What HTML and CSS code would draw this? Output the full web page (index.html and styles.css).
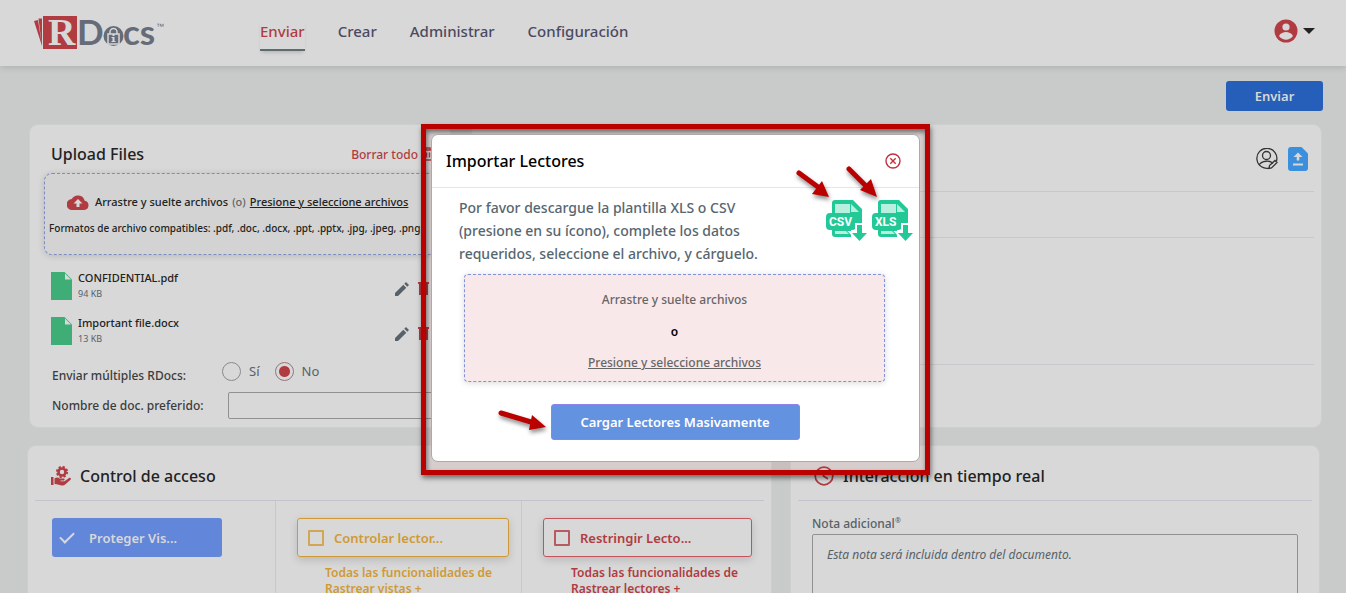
FILE: index.html
```html
<!DOCTYPE html>
<html lang="es">
<head>
  <meta charset="UTF-8" />
  <meta name="viewport" content="width=device-width, initial-scale=1.0" />
  <title>RDocs - Enviar</title>
  <link rel="stylesheet" href="styles.css">
</head>
<body>

  <header class="navbar">
    <a href="#" class="logo" aria-label="RDocs">
      <svg width="136" height="56" viewBox="0 -10 136 56">
        <path d="M0 6l4-1 4 26z M4.500 3.500h3.500v28z" fill="#b03c42" />
        <rect x="9" y="1" width="34" height="33" fill="#b03c42" />
        <text x="14" y="30" class="logo-r">R</text>
        <text x="43" y="30" class="logo-docs">D</text>
        <circle cx="79.500" cy="21" r="10" fill="#666b78" />
        <path d="M74 19h11v10h-11z M76 19v-2a3.500 3.500 0 0 1 7 0v2" fill="none" stroke="#d8d8d8" stroke-width="1.500" />
        <path d="M77.500 22h3v4h1v1h-4v-1h1v-3h-1z M78.500 19h2v2h-2z" fill="#d8d8d8" />
        <text x="89" y="30" class="logo-docs">cs</text>
        <text x="122" y="14" class="logo-tm">™</text>
      </svg>
    </a>
    <nav class="navbar-menu">
      <a href="#" class="active">Enviar</a>
      <a href="#">Crear</a>
      <a href="#">Administrar</a>
      <a href="#">Configuración</a>
    </nav>
    <button class="profile" aria-label="Mi cuenta">
      <svg width="24" height="24" viewBox="0 0 24 24">
        <circle cx="12" cy="12" r="11.500" fill="#b03c42" />
        <circle cx="12" cy="8" r="3.600" fill="#d8d8d8" />
        <path d="M5 17c1.500-3 4.500-4 7-4s5.500 1 7 4c-2 2.700-4.500 3.700-7 3.700S7 19.700 5 17z" fill="#d8d8d8" />
      </svg>
      <svg width="12" height="6" viewBox="0 0 12 6"><path d="M0 0h12L6 6z" fill="#222" /></svg>
    </button>
  </header>

  <main>
    <div class="actions">
      <button class="btn-send">Enviar</button>
    </div>

    <div class="row row-top">
      <!-- Upload Files -->
      <section class="card upload">
        <div class="upload-head">
          <h2>Upload Files</h2>
          <a href="#" class="clear-all">Borrar todo
            <svg width="12" height="14" viewBox="0 0 12 14"><path d="M0 3h12M4 3V1h4v2M2 3v10h8V3M4.500 5.500v5M7.500 5.500v5" fill="none" stroke="#b03c42" stroke-width="1.500" /></svg>
          </a>
        </div>
        <div class="drop-files">
          <p class="drop-line">
            <svg width="22" height="15" viewBox="0 0 22 15">
              <path d="M17.700 5.700A7 7 0 0 0 4.800 4 5.500 5.500 0 0 0 5.500 15h11.700a4.700 4.700 0 0 0 .5-9.300z" fill="#b03c42" />
              <path d="M11 4l4.500 4.500h-3V12h-3V8.500h-3z" fill="#d8d8d8" />
            </svg>
            <span>Arrastre y suelte archivos</span>
            <span class="or">(o)</span>
            <a href="#">Presione y seleccione archivos</a>
          </p>
          <p class="formats">Formatos de archivo compatibles: .pdf, .doc, .docx, .ppt, .pptx, .jpg, .jpeg, .png</p>
        </div>

        <ul class="files">
          <li>
            <svg width="21" height="28" viewBox="0 0 21 28"><path d="M0 0h13.500L21 7.500V28H0z" fill="#3ead76" /><path d="M14 1.500V7.500h6z" fill="#d8d8d8" /></svg>
            <div class="file-info">
              <span class="file-name">CONFIDENTIAL.pdf</span>
              <span class="file-size">94 KB</span>
            </div>
            <button aria-label="Editar">
              <svg width="14" height="14" viewBox="0 0 14 14"><path d="M0 11l8.300-8.300 3 3L3 14H0zM9.300 1.700L11 0l3 3-1.700 1.700z" fill="#566169" /></svg>
            </button>
            <button aria-label="Borrar">
              <svg width="11" height="13" viewBox="0 0 11 13"><path d="M0 0h11v2H0zM1 2h9v11H1z" fill="#b03c42" /></svg>
            </button>
          </li>
          <li>
            <svg width="21" height="28" viewBox="0 0 21 28"><path d="M0 0h13.500L21 7.500V28H0z" fill="#3ead76" /><path d="M14 1.500V7.500h6z" fill="#d8d8d8" /></svg>
            <div class="file-info">
              <span class="file-name">Important file.docx</span>
              <span class="file-size">13 KB</span>
            </div>
            <button aria-label="Editar">
              <svg width="14" height="14" viewBox="0 0 14 14"><path d="M0 11l8.300-8.300 3 3L3 14H0zM9.300 1.700L11 0l3 3-1.700 1.700z" fill="#566169" /></svg>
            </button>
            <button aria-label="Borrar">
              <svg width="11" height="13" viewBox="0 0 11 13"><path d="M0 0h11v2H0zM1 2h9v11H1z" fill="#b03c42" /></svg>
            </button>
          </li>
        </ul>

        <div class="field">
          <span class="field-label">Enviar múltiples RDocs:</span>
          <div class="radios">
            <label><input type="radio" name="multiple" /> Sí</label>
            <label><input type="radio" name="multiple" checked /> No</label>
          </div>
        </div>
        <div class="field">
          <label class="field-label" for="docName">Nombre de doc. preferido:</label>
          <input type="text" id="docName" />
        </div>
      </section>

      <!-- Readers -->
      <section class="card readers">
        <div class="readers-head">
          <button aria-label="Editar lectores">
            <svg width="22" height="22" viewBox="0 0 22 22" fill="none" stroke="#333" stroke-width="1.300">
              <path d="M14 19.800A10 10 0 1 1 20.500 13" />
              <circle cx="10.500" cy="7.500" r="4" />
              <path d="M3 17c3-4.500 11-5 14-1.500M13 20.500l.5-3 5.500-5 2 2-5.500 5.500z" />
            </svg>
          </button>
          <button aria-label="Importar lectores">
            <svg width="20" height="24" viewBox="0 0 20 24">
              <path d="M3 0h10.500L20 6.500V21a3 3 0 0 1-3 3H3a3 3 0 0 1-3-3V3a3 3 0 0 1 3-3z" fill="#3b8fdd" />
              <path d="M10 5.500l4.500 4.500h-3.200v3.500H8.700V10H5.500zM5 16.500h10v2H5z" fill="#d8d8d8" />
            </svg>
          </button>
        </div>
        <div class="readers-line"></div>
        <div class="readers-body"></div>
      </section>
    </div>

    <div class="row row-bottom">
      <!-- Access control -->
      <section class="card access">
        <div class="card-head">
          <svg width="20" height="20" viewBox="0 0 20 20">
            <circle cx="11" cy="6" r="3.500" fill="none" stroke="#b03c42" stroke-width="2.600" />
            <circle cx="11" cy="6" r="5.200" fill="none" stroke="#b03c42" stroke-width="1.800" stroke-dasharray="2.300 1.780" />
            <path d="M0 11h2.500v8H0zM3.500 12.500c2-1.500 4-1 5 0h4c1.500 0 1.500 2 0 2h-3v.7h4L18 12c1.300-.7 2.500.8 1.500 1.700l-5 4.500c-1 .8-2 1.300-3.500 1.300-2.500 0-4-1.500-7.500-1.500z" fill="#b03c42" />
          </svg>
          <h2>Control de acceso</h2>
        </div>
        <div class="access-cols">
          <div class="access-col">
            <label class="option option-blue"><input type="checkbox" checked /> Proteger Vis...</label>
          </div>
          <div class="access-col">
            <label class="option option-yellow"><input type="checkbox" /> Controlar lector...</label>
            <p class="hint hint-yellow">Todas las funcionalidades de Rastrear vistas +</p>
          </div>
          <div class="access-col">
            <label class="option option-red"><input type="checkbox" /> Restringir Lecto...</label>
            <p class="hint hint-red">Todas las funcionalidades de Rastrear lectores +</p>
          </div>
        </div>
      </section>

      <!-- Real time interaction -->
      <section class="card realtime">
        <div class="card-head">
          <svg width="20" height="20" viewBox="0 0 20 20" fill="none" stroke="#b03c42" stroke-width="1.700">
            <circle cx="10" cy="10" r="8.800" />
            <path d="M9.500 4.500V10l4.500 3" />
          </svg>
          <h2>Interacción en tiempo real</h2>
        </div>
        <div class="note">
          <label for="note">Nota adicional<sup>®</sup></label>
          <textarea id="note" placeholder="Esta nota será incluida dentro del documento."></textarea>
        </div>
      </section>
    </div>
  </main>

  <!-- Import modal -->
  <div class="overlay">
    <div class="frame">
      <div class="modal" role="dialog" aria-labelledby="modalTitle">
        <div class="modal-head">
          <h2 id="modalTitle">Importar Lectores</h2>
          <button aria-label="Cerrar">
            <svg width="16" height="16" viewBox="0 0 16 16" fill="none" stroke="#c2303f" stroke-width="1.400">
              <circle cx="8" cy="8" r="7" />
              <path d="M5.300 5.300l5.400 5.400M10.700 5.300l-5.400 5.400" />
            </svg>
          </button>
        </div>
        <div class="modal-body">
          <div class="intro">
            <p>Por favor descargue la plantilla XLS o CSV (presione en su ícono), complete los datos requeridos, seleccione el archivo, y cárguelo.</p>
            <div class="templates">
              <button aria-label="Descargar CSV">
                <svg width="41" height="41" viewBox="0 0 41 41">
                  <path d="M9 0h18l9 9v15H6V3a3 3 0 0 1 3-3zM6 29h19v8H9a3 3 0 0 1-3-3z" fill="#22c997" />
                  <path d="M9 4h15v9H9zM9 31h11l3 3H9z" fill="#b9efdf" />
                  <path d="M25 4v8h8z" fill="#b9efdf" />
                  <rect x="0" y="13" width="30" height="17" rx="4" fill="#22c997" />
                  <path d="M28 13h8v13h-8z" fill="#22c997" />
                  <path d="M31 25h5v8h5l-7.500 8L26 33h5z" fill="#22c997" stroke="#fff" stroke-width="4" paint-order="stroke" />
                  <text x="3" y="26">CSV</text>
                </svg>
              </button>
              <button aria-label="Descargar XLS">
                <svg width="41" height="41" viewBox="0 0 41 41">
                  <path d="M9 0h18l9 9v15H6V3a3 3 0 0 1 3-3zM6 29h19v8H9a3 3 0 0 1-3-3z" fill="#22c997" />
                  <path d="M9 4h15v9H9zM9 31h11l3 3H9z" fill="#b9efdf" />
                  <path d="M25 4v8h8z" fill="#b9efdf" />
                  <rect x="0" y="13" width="30" height="17" rx="4" fill="#22c997" />
                  <path d="M28 13h8v13h-8z" fill="#22c997" />
                  <path d="M31 25h5v8h5l-7.500 8L26 33h5z" fill="#22c997" stroke="#fff" stroke-width="4" paint-order="stroke" />
                  <text x="3" y="26">XLS</text>
                </svg>
              </button>
            </div>
          </div>
          <div class="drop-readers">
            <span>Arrastre y suelte archivos</span>
            <strong>o</strong>
            <a href="#">Presione y seleccione archivos</a>
          </div>
          <button class="btn-load">Cargar Lectores Masivamente</button>
        </div>

        <svg class="arrow arrow-csv" width="36" height="34" viewBox="0 0 36 34"><path d="M3 4L22 18" /><path class="tip" d="M26 12l7 16-17-3z" /></svg>
        <svg class="arrow arrow-xls" width="36" height="36" viewBox="0 0 36 36"><path d="M3 4L20 21" /><path class="tip" d="M25 14l6 18-17-7z" /></svg>
        <svg class="arrow arrow-load" width="52" height="28" viewBox="0 0 52 28"><path d="M4 5L34 14" /><path class="tip" d="M35 7l14 12-17 3z" /></svg>
      </div>
    </div>
  </div>

</body>
</html>
```

FILE: styles.css
```css
* {
  margin: 0;
  padding: 0;
  box-sizing: border-box;
}

body {
  font-family: "Noto Sans", "Open Sans", sans-serif;
  font-size: 12px;
  font-weight: 500;
  color: #222;
  background-color: #c9cbca;
  height: 100vh;
  overflow: hidden;
}

button {
  font-family: inherit;
  border: none;
  background: none;
  cursor: pointer;
}

svg {
  display: block;
  flex-shrink: 0;
}

h2 {
  font-size: 16px;
  font-weight: 500;
  line-height: 24px;
}

/* Navbar */
.navbar {
  display: flex;
  align-items: center;
  height: 66px;
  padding: 0 31px 0 34px;
  background-color: #d8d8d8;
  box-shadow: 0 2px 6px rgba(0, 0, 0, 0.12);
}

.logo {
  margin-right: 90px;
}

.logo-r {
  font: bold 38px "Liberation Serif", serif;
  fill: #d8d8d8;
}

.logo-docs {
  font: bold 35px Lato, sans-serif;
  fill: #666b78;
}

.logo-tm {
  font: 8px "Liberation Sans", sans-serif;
  fill: #666b78;
}

.navbar-menu {
  display: flex;
  gap: 33px;
  padding-top: 4px;
}

.navbar-menu a {
  padding-bottom: 6px;
  border-bottom: 2px solid transparent;
  font-size: 15px;
  line-height: 24px;
  color: #4a4a62;
  text-decoration: none;
}

.navbar-menu a.active {
  color: #b03c42;
  border-color: #5d6d6d;
  box-shadow: 0 3px 4px -2px rgba(0, 0, 0, 0.2);
}

.profile {
  display: flex;
  align-items: center;
  gap: 5px;
  margin-left: auto;
  padding-bottom: 4px;
}

/* Page */
main {
  padding: 15px 23px 0 27px;
}

.actions {
  display: flex;
  justify-content: flex-end;
  margin-bottom: 13px;
}

.btn-send {
  width: 97px;
  height: 30px;
  border-radius: 3px;
  background-color: #265fb9;
  color: #d8d8d8;
  font-size: 13px;
  font-weight: 600;
}

.row {
  display: grid;
}

.row-top {
  grid-template-columns: 422fr 851fr;
  gap: 20px;
  margin: 0 1px 0 2px;
}

.row-bottom {
  grid-template-columns: 745fr 530fr;
  gap: 18px;
  margin: 17px 3px 0 0;
}

.card {
  min-width: 0;
  background-color: #d8d8d8;
  border: 1px solid #cdcfce;
  border-radius: 9px;
}

/* Upload */
.upload {
  height: 304px;
  padding: 17px 14px 0;
}

.upload-head {
  display: flex;
  justify-content: space-between;
  padding: 0 2px 0 7px;
}

.clear-all {
  display: flex;
  align-items: center;
  gap: 4px;
  font-size: 12px;
  color: #b03c42;
  text-decoration: none;
}

.drop-files {
  margin-top: 7px;
  height: 82px;
  padding: 16px 4px 0;
  border: 1px dashed #7d8cc0;
  border-radius: 8px;
  background-color: #d3d3d3;
  box-shadow: 0 1px 6px rgba(0, 0, 0, 0.15);
  white-space: nowrap;
}

.drop-line {
  display: flex;
  align-items: center;
  gap: 4px;
  padding-left: 18px;
  font-size: 11px;
  line-height: 24px;
}

.drop-line svg {
  margin-right: 2px;
}

.drop-line a {
  color: #222;
}

.or {
  color: #666;
}

.formats {
  margin-top: 4px;
  font-size: 10px;
  line-height: 20px;
}

.files {
  list-style: none;
  padding: 15px 4px 0 7px;
}

.files li {
  display: flex;
  align-items: center;
  gap: 6px;
  height: 31px;
  margin-bottom: 14px;
}

.file-info {
  display: flex;
  flex-direction: column;
  flex: 1;
}

.file-name {
  font-size: 11px;
  line-height: 16px;
}

.file-size {
  font-size: 9px;
  font-weight: 400;
  line-height: 16px;
  color: #566169;
}

.files button {
  margin: 6px 3px 0 0;
}

.field {
  display: flex;
  align-items: center;
  height: 30px;
  padding-left: 8px;
}

.field-label {
  width: 176px;
  font-size: 12px;
  color: #3c3c3c;
}

.radios {
  display: flex;
  gap: 15px;
  margin-left: -6px;
  padding-bottom: 8px;
}

.radios label {
  display: flex;
  align-items: center;
  gap: 8px;
  font-size: 13px;
  font-weight: 400;
  color: #566169;
}

.radios input {
  appearance: none;
  width: 19px;
  height: 19px;
  border: 1px solid #8a8a8a;
  border-radius: 50%;
}

.radios input:checked {
  border-color: #9a7476;
  background: radial-gradient(circle, #b03c42 5px, transparent 6px);
}

.field input[type="text"] {
  flex: 1;
  min-width: 0;
  height: 27px;
  padding: 0 8px;
  border: 1px solid #919191;
  border-radius: 2px;
  background: none;
}

/* Readers */
.readers {
  padding: 0 7px;
}

.readers-head {
  display: flex;
  align-items: center;
  justify-content: flex-end;
  gap: 10px;
  height: 67px;
  padding: 2px 6px 0;
  border-bottom: 1px solid #c8c8cc;
}

.readers-line {
  height: 46px;
  border-bottom: 1px solid #c8c8cc;
}

.readers-body {
  height: 127px;
  border-bottom: 1px solid #c8c8cc;
}

/* Access control */
.access,
.realtime {
  height: 220px;
  padding: 0 7px;
}

.card-head {
  display: flex;
  align-items: center;
  gap: 9px;
  height: 55px;
  padding: 6px 16px 0;
  border-bottom: 1px solid #c3c3cd;
}

.access-cols {
  display: grid;
  grid-template-columns: 241fr 246fr 242fr;
  height: 100%;
}

.access-col {
  padding: 17px 12px 0 21px;
  border-right: 1px solid #c8c8c8;
}

.access-col:first-child {
  padding-left: 17px;
}

.access-col:last-child {
  border: none;
}

.option {
  display: flex;
  align-items: center;
  gap: 10px;
  height: 39px;
  padding: 0 10px;
  border: 1px solid;
  border-radius: 3px;
  box-shadow: 0 3px 8px rgba(0, 0, 0, 0.15);
  font-size: 13px;
  font-weight: 600;
}

.option input {
  appearance: none;
  width: 16px;
  height: 16px;
  border: 2px solid;
  border-radius: 1px;
  color: inherit;
  opacity: 0.8;
}

.option-blue {
  max-width: 170px;
  padding: 0 8px;
  gap: 15px;
  border: none;
  background-color: #6286d9;
  color: #d8d8d8;
  box-shadow: none;
}

/* tick without a box */
.option-blue input {
  width: 14px;
  height: 8px;
  margin-bottom: 4px;
  border-width: 0 0 2px 2px;
  border-radius: 0;
  opacity: 1;
  transform: rotate(-45deg);
}

.option-yellow,
.hint-yellow {
  color: #cf9a35;
}

.option-red,
.hint-red {
  color: #b03c42;
}

.option-red {
  border-color: #c4525c;
}

.hint {
  margin: 8px 0 0 28px;
  font-size: 12px;
  font-weight: 600;
  line-height: 16px;
}

/* Note */
.note {
  display: flex;
  flex-direction: column;
  padding: 13px 14px 0;
}

.note label {
  font-size: 12px;
  line-height: 20px;
  color: #566169;
}

.note sup {
  font-size: 7px;
  line-height: 1;
}

.note textarea {
  height: 90px;
  padding: 10px 14px;
  border: 1px solid #919191;
  border-radius: 2px;
  background: none;
  resize: none;
  font: italic 12px/20px "Noto Sans", "Open Sans", sans-serif;
}

.note textarea::placeholder {
  color: #566169;
}

/* Modal */
.overlay {
  position: fixed;
  inset: 0;
  display: flex;
  justify-content: center;
  align-items: flex-start;
  padding: 124px 0 0 5px;
}

.frame {
  width: 509px;
  padding: 5px 5px 8px;
  border: 5px solid #bb0000;
  background-color: rgba(190, 0, 0, 0.05);
  box-shadow: 1px 3px 5px rgba(0, 0, 0, 0.5), inset 1px 3px 5px rgba(0, 0, 0, 0.5);
}

.modal {
  position: relative;
  border: 1px solid #aaa;
  border-radius: 7px;
  background-color: #fff;
}

.modal-head {
  display: flex;
  align-items: center;
  justify-content: space-between;
  height: 53px;
  padding: 0 18px 0 14px;
  border-bottom: 1px solid #e6e6e6;
  color: #000;
}

.modal-body {
  display: flex;
  flex-direction: column;
  align-items: center;
  padding: 8px 6px 21px 27px;
}

.intro {
  display: flex;
  justify-content: space-between;
  width: 100%;
}

.intro p {
  width: 320px;
  font-size: 14px;
  line-height: 23px;
  color: #566670;
}

.templates {
  display: flex;
  gap: 5px;
  padding-top: 4px;
}

.templates button {
  height: 41px;
}

.templates text {
  font: bold 12px Roboto, sans-serif;
  fill: #fff;
}

.drop-readers {
  display: flex;
  flex-direction: column;
  align-items: center;
  justify-content: space-between;
  align-self: stretch;
  height: 108px;
  margin: 9px 28px 22px 5px;
  padding: 16px 0 10px;
  border: 1px dashed #7f93d6;
  border-radius: 4px;
  background-color: #f9e8ea;
  box-shadow: 0 1px 6px rgba(0, 0, 0, 0.15);
  color: #666;
}

.drop-readers strong {
  color: #000;
  font-weight: 600;
}

.drop-readers a {
  color: #666;
}

.btn-load {
  width: 249px;
  height: 36px;
  margin-right: 22px;
  border: 1px solid #8f83ea;
  border-radius: 3px;
  background-color: #6292e0;
  color: #fff;
  font-size: 13px;
  font-weight: 600;
}

.arrow {
  position: absolute;
  stroke: #bb0000;
  stroke-width: 5px;
  stroke-linecap: round;
  fill: #bb0000;
  filter: drop-shadow(1px 3px 2px rgba(0, 0, 0, 0.45));
}

.arrow .tip {
  stroke: none;
}

.arrow-csv {
  top: 34px;
  right: 87px;
}

.arrow-xls {
  top: 30px;
  right: 37px;
}

.arrow-load {
  top: 273px;
  left: 65px;
}
```
